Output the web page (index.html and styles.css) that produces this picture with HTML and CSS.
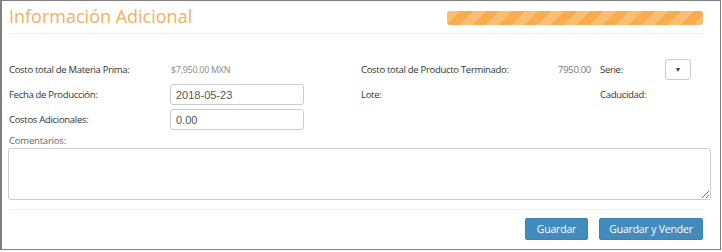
FILE: index.html
```html
<!DOCTYPE html>
<html lang="es">
<head>
<meta charset="utf-8">
<title>Información Adicional</title>
<link rel="stylesheet" href="styles.css">
</head>
<body>
<div class="frame">
  <div class="header">
    <h1 class="title">Información Adicional</h1>
    <div class="progress"></div>
  </div>
  <div class="fields">
    <div class="row">
      <span class="label">Costo total de Materia Prima:</span>
      <span class="money">$7,950.00 MXN</span>
      <span class="label">Costo total de Producto Terminado:</span>
      <span class="amount">7950.00</span>
      <span class="label">Serie:</span>
      <span class="select"><span class="caret">▼</span></span>
    </div>
    <div class="row">
      <span class="label">Fecha de Producción:</span>
      <span class="cell"><input class="input" type="text" value="2018-05-23"></span>
      <span class="label">Lote:</span>
      <span class="amount"></span>
      <span class="label">Caducidad:</span>
      <span></span>
    </div>
    <div class="row">
      <span class="label">Costos Adicionales:</span>
      <span class="cell"><input class="input" type="text" value="0.00"></span>
    </div>
  </div>
  <div class="comments">
    <label class="comments-label">Comentarios:</label>
    <textarea class="textarea"></textarea>
  </div>
  <div class="footer">
    <button class="btn btn-save">Guardar</button>
    <button class="btn btn-sell">Guardar y Vender</button>
  </div>
</div>
</body>
</html>
```
FILE: styles.css
```css
* { box-sizing: border-box; }
html, body { margin: 0; padding: 0; background: #ffffff; }
body { font-family: "Open Sans", "Noto Sans", sans-serif; color: #333; }

.frame {
  width: 721px;
  height: 250px;
  border: 1px solid #7f7f7f;
  border-left-width: 2px;
  padding: 0 17px 0 7px;
  background: #fff;
}

.header {
  display: flex;
  align-items: flex-start;
  justify-content: space-between;
  height: 33px;
  border-bottom: 1px solid #eeeeee;
}
.title {
  margin: 3px 0 0 0;
  font-size: 18px;
  font-weight: 400;
  line-height: 24px;
  color: #f5b15a;
}
.progress {
  width: 256px;
  height: 14px;
  margin-top: 10px;
  border-radius: 3px;
  background-color: #f8ac4c;
  background-image: linear-gradient(135deg,
    rgba(255,255,255,.22) 25%, transparent 25%,
    transparent 50%, rgba(255,255,255,.22) 50%,
    rgba(255,255,255,.22) 75%, transparent 75%, transparent);
  background-size: 26px 26px;
}

.fields {
  display: flex;
  flex-direction: column;
  gap: 4px;
  margin-top: 25px;
}
.row {
  display: grid;
  grid-template-columns: 161px 191px 230px 9px 65px 26px;
  align-items: center;
  height: 21px;
  font-size: 9.5px;
  letter-spacing: -0.3px;
}
.row > :nth-child(3) { grid-column: 3; grid-row: 1; justify-self: start; }
.row > :nth-child(4) { grid-column: 3; grid-row: 1; justify-self: end; }
.row > :nth-child(5) { grid-column: 5; grid-row: 1; }
.row > :nth-child(6) { grid-column: 6; grid-row: 1; }

.label { color: #333; white-space: nowrap; }
.money { color: #8a8a8a; font-size: 9px; padding-left: 1px; }
.amount { color: #777; }
.cell { display: flex; }
.input {
  width: 134px;
  height: 21px;
  border: 1px solid #cccccc;
  border-radius: 3px;
  padding: 0 5px;
  font-family: "Liberation Sans", Arial, sans-serif;
  font-size: 11px;
  letter-spacing: 0;
  color: #555;
  background: #fff;
}
.select {
  display: flex;
  align-items: center;
  justify-content: center;
  width: 26px;
  height: 21px;
  border: 1px solid #cccccc;
  border-radius: 3px;
}
.caret { font-size: 7px; color: #444; letter-spacing: 0; }

.comments { margin-top: 4px; }
.comments-label {
  display: block;
  font-size: 9.5px;
  font-weight: 400;
  letter-spacing: -0.2px;
  color: #666;
  line-height: 14px;
}
.textarea {
  display: block;
  width: 703px;
  height: 52px;
  margin: 0 0 0 -1px;
  border: 1px solid #cccccc;
  border-radius: 3px;
  resize: both;
}

.footer {
  display: flex;
  justify-content: flex-end;
  gap: 11px;
  margin-top: 9px;
  border-top: 1px solid #eeeeee;
  padding-top: 8px;
}
.btn {
  height: 22px;
  padding: 0;
  border: 1px solid #3a84b2;
  border-radius: 2px;
  background: #428bbd;
  color: #fff;
  font-family: "Open Sans", sans-serif;
  font-size: 10.5px;
  letter-spacing: -0.2px;
}
.btn-save { width: 63px; }
.btn-sell { width: 104px; }
```
